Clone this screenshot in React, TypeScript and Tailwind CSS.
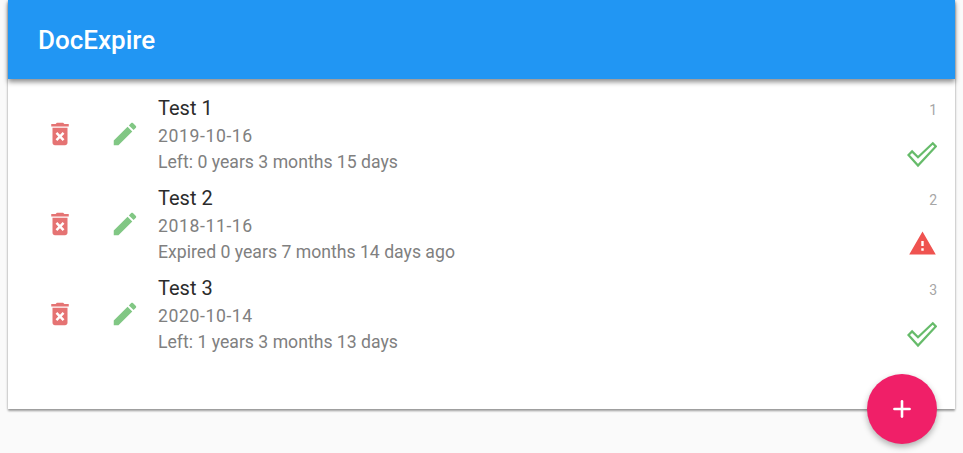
import { Plus } from 'lucide-react'

const docs = [
  { id: 1, title: 'Test 1', date: '2019-10-16', note: 'Left: 0 years 3 months 15 days', expired: false },
  { id: 2, title: 'Test 2', date: '2018-11-16', note: 'Expired 0 years 7 months 14 days ago', expired: true },
  { id: 3, title: 'Test 3', date: '2020-10-14', note: 'Left: 1 years 3 months 13 days', expired: false },
]

function DeleteIcon() {
  return (
    <svg viewBox="0 0 24 24" className="h-[30px] w-[30px] fill-[#e57373]">
      <path d="M6 19c0 1.1.9 2 2 2h8c1.1 0 2-.9 2-2V7H6v12zm2.46-7.12l1.41-1.41L12 12.59l2.12-2.12 1.41 1.41L13.41 14l2.12 2.12-1.41 1.41L12 15.41l-2.12 2.12-1.41-1.41L10.59 14l-2.13-2.12zM15.5 4l-1-1h-5l-1 1H5v2h14V4z" />
    </svg>
  )
}

function EditIcon() {
  return (
    <svg viewBox="0 0 24 24" className="h-[30px] w-[30px] fill-[#81c784]">
      <path d="M3 17.25V21h3.75L17.81 9.94l-3.75-3.75L3 17.25zM20.71 7.04c.39-.39.39-1.02 0-1.41l-2.34-2.34c-.39-.39-1.02-.39-1.41 0l-1.83 1.83 3.75 3.75 1.83-1.83z" />
    </svg>
  )
}

function CheckIcon() {
  return (
    <svg viewBox="0 0 30 30" className="h-[30px] w-[30px] fill-none stroke-[#66bb6a] stroke-[2.2]">
      <path d="M1.5 16l3.6-3.6 5.9 5.8L25.8 4.2l3 3.2L11 26.5z" />
    </svg>
  )
}

function WarningIcon() {
  return (
    <svg viewBox="0 0 24 24" className="h-[29px] w-[29px] fill-[#ef5350]">
      <path d="M1 21h22L12 2 1 21zm12-3h-2v-2h2v2zm0-4h-2v-4h2v4z" />
    </svg>
  )
}

export default function App() {
  return (
    <div className="relative h-[453px] overflow-hidden bg-[#fafafa] px-2 font-['Roboto',sans-serif]">
      <div className="h-[409px] bg-white shadow-[0_2px_2px_rgba(0,0,0,0.35),0_0_3px_rgba(0,0,0,0.15)]">
        <header className="flex h-[79px] items-center bg-[#2196f3] pt-px pl-[30px] shadow-[0_3px_5px_rgba(0,0,0,0.45)]">
          <h1 className="text-[26px] font-medium text-white">DocExpire</h1>
        </header>
        <ul className="pt-[15px]">
          {docs.map((doc) => (
            <li key={doc.id} className="flex h-[90px] pl-5 pr-[18px]">
              <button className="flex h-[80px] w-[64px] items-center justify-center">
                <DeleteIcon />
              </button>
              <button className="flex h-[80px] w-[66px] items-center justify-center">
                <EditIcon />
              </button>
              <div className="flex-1">
                <div className="text-[20px] leading-[29px] text-[#2b2b2b]">{doc.title}</div>
                <div className="text-[17.6px] leading-[26px] tracking-[0.6px] text-[#808080]">{doc.date}</div>
                <div className="text-[17.65px] leading-[26px] text-[#808080]">{doc.note}</div>
              </div>
              <div className="flex w-[32px] flex-col items-end">
                <span className="pt-[6px] text-[14px] leading-[20px] text-[#a6a6a6]">{doc.id}</span>
                <span className="mt-[19px] flex">{doc.expired ? <WarningIcon /> : <CheckIcon />}</span>
              </div>
            </li>
          ))}
        </ul>
      </div>
      <button className="absolute top-[374px] left-[867px] flex h-[70px] w-[70px] items-center justify-center rounded-full bg-[#f01f68] text-white shadow-[0_3px_6px_rgba(0,0,0,0.3)]">
        <Plus size={26} strokeWidth={2.4} />
      </button>
    </div>
  )
}
